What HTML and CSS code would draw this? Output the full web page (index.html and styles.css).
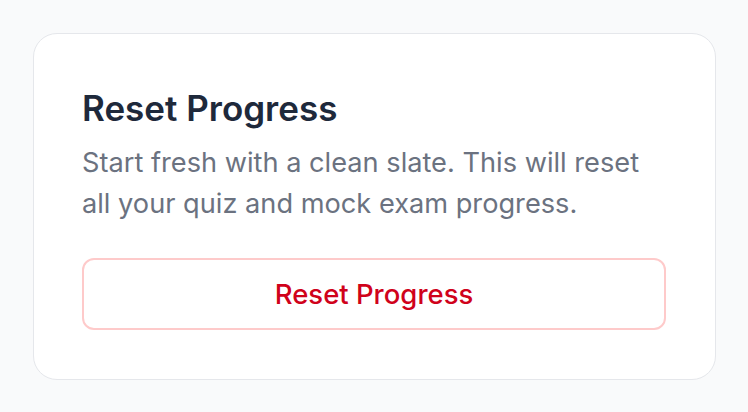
FILE: index.html
```html
<!DOCTYPE html>
<html lang="en">
<head>
  <meta charset="UTF-8" />
  <meta name="viewport" content="width=device-width, initial-scale=1.0"/>
  <title>Reset Progress</title>
  <link rel="stylesheet" href="styles.css">
</head>
<body>

<div class="card">
  <h2>Reset Progress</h2>
  <p>Start fresh with a clean slate. This will reset all your quiz and mock exam progress.</p>
  <button type="button" class="reset-btn">Reset Progress</button>
</div>

</body>
</html>
```

FILE: styles.css
```css
body {
  font-family: Inter, "Noto Sans", sans-serif;
  background-color: #f9fafb;
  margin: 0;
  padding: 33px 32px 33px 33px;
}
.card {
  background: #fff;
  border: 1.5px solid #e5e7eb;
  border-radius: 24px;
  padding: 53px 49px 49px 48px;
}
.card h2 {
  margin: 0;
  font-size: 35px;
  font-weight: 600;
  color: #1e293b;
  line-height: 42px;
}
.card p {
  margin: 13px 0 34px;
  font-size: 27.2px;
  line-height: 41px;
  color: #6b7280;
}
.reset-btn {
  display: block;
  width: 100%;
  height: 72px;
  background: #fff;
  border: 2px solid #fecaca;
  border-radius: 12px;
  color: #d0021b;
  font-family: inherit;
  font-size: 27.5px;
  font-weight: 500;
  cursor: pointer;
}
```
